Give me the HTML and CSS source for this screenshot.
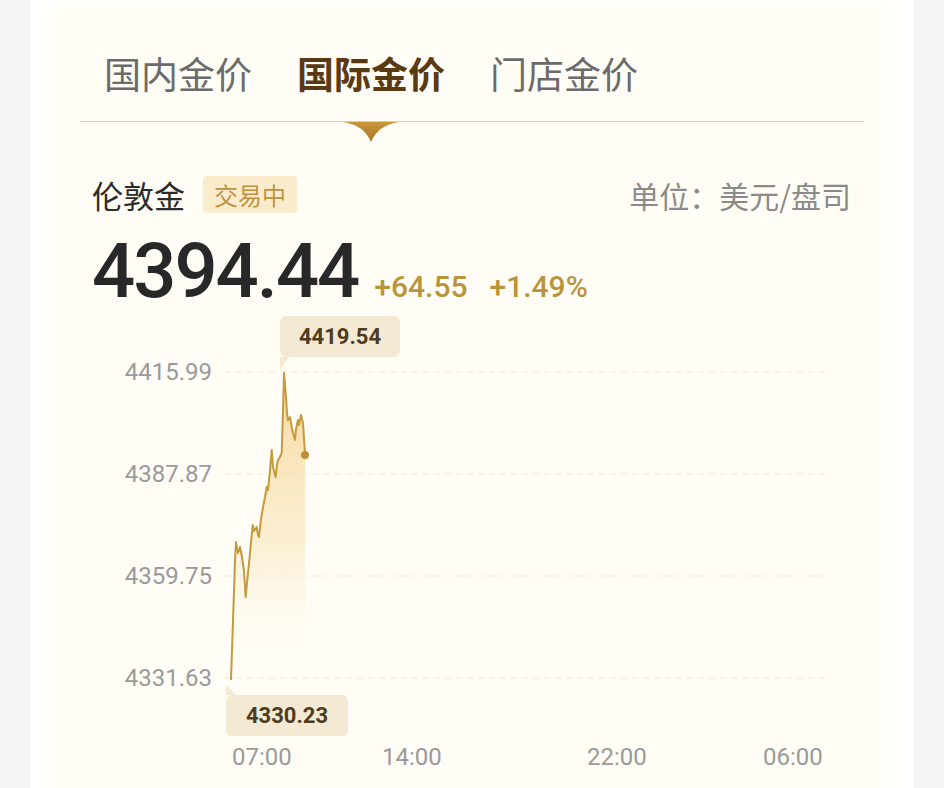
FILE: index.html
```html
<!DOCTYPE html>
<html lang="zh-CN">
<head>
    <meta charset="UTF-8">
    <meta name="viewport" content="width=device-width, initial-scale=1.0">
    <title>金价</title>
    <link rel="stylesheet" href="styles.css">
</head>
<body>
    <div class="panel">
        <div class="card">
            <div class="tabs">
                <span class="tab">国内金价</span>
                <span class="tab active">国际金价
                    <svg class="tab-mark" width="56" height="20" viewBox="0 0 56 20">
                        <defs>
                            <linearGradient id="markGrad" x1="0" y1="0" x2="0" y2="1">
                                <stop offset="0" stop-color="#c8963a"/>
                                <stop offset="1" stop-color="#a97628"/>
                            </linearGradient>
                        </defs>
                        <path d="M0 0 H56 Q35 3 28 20 Q21 3 0 0 Z" fill="url(#markGrad)"/>
                    </svg>
                </span>
                <span class="tab">门店金价</span>
            </div>

            <div class="head">
                <span class="name">伦敦金</span>
                <span class="badge">交易中</span>
                <span class="unit">单位：美元/盘司</span>
            </div>

            <div class="price-row">
                <span class="price">4394.44</span>
                <span class="change">+64.55</span>
                <span class="change">+1.49%</span>
            </div>

            <div class="chart">
                <div class="y-axis">
                    <span>4415.99</span>
                    <span>4387.87</span>
                    <span>4359.75</span>
                    <span>4331.63</span>
                </div>
                <svg class="plot" width="652" height="408" viewBox="0 0 652 408">
                    <defs>
                        <linearGradient id="fillGrad" x1="0" y1="0" x2="0" y2="1">
                            <stop offset="0" stop-color="#f3cf85" stop-opacity="0.8"/>
                            <stop offset="0.5" stop-color="#f8e2b4" stop-opacity="0.5"/>
                            <stop offset="0.85" stop-color="#fffdf5" stop-opacity="0"/>
                        </linearGradient>
                    </defs>
                    <g class="grid">
                        <line x1="13" y1="51" x2="613" y2="51"/>
                        <line x1="13" y1="153" x2="613" y2="153"/>
                        <line x1="13" y1="255" x2="613" y2="255"/>
                        <line x1="13" y1="357" x2="613" y2="357"/>
                    </g>
                    <path class="area" d="M19 359 L21 300 L23 240 L24 221 L25 228 L26 232 L28 226 L30 236 L32 250 L33.7 276 L35 262 L36 252 L38 232 L40.7 204 L42 210 L44.7 206 L46 214 L47 216 L49 198 L51 186 L53 176 L54.7 166 L56 169 L58 150 L59.7 129 L61 146 L62 150 L63.7 156 L65 144 L66 139 L68 136 L69.7 132 L71 90 L72 52 L73 64 L74 76 L75 92 L76 99 L78 96 L79.7 106 L81 112 L83 119 L84 108 L86 99 L87 104 L89 94 L90 98 L91 102 L92 118 L93 132 L93 400 L19 400 Z"/>
                    <path class="line" d="M19 359 L21 300 L23 240 L24 221 L25 228 L26 232 L28 226 L30 236 L32 250 L33.7 276 L35 262 L36 252 L38 232 L40.7 204 L42 210 L44.7 206 L46 214 L47 216 L49 198 L51 186 L53 176 L54.7 166 L56 169 L58 150 L59.7 129 L61 146 L62 150 L63.7 156 L65 144 L66 139 L68 136 L69.7 132 L71 90 L72 52 L73 64 L74 76 L75 92 L76 99 L78 96 L79.7 106 L81 112 L83 119 L84 108 L86 99 L87 104 L89 94 L90 98 L91 102 L92 118 L93 132"/>
                    <circle cx="93" cy="134" r="4" fill="#bf8f35"/>
                </svg>
                <div class="tip tip-high">4419.54</div>
                <div class="tip tip-low">4330.23</div>
            </div>

            <div class="x-axis">
                <span class="t1">07:00</span>
                <span class="t2">14:00</span>
                <span class="t3">22:00</span>
                <span class="t4">06:00</span>
            </div>
        </div>
    </div>
</body>
</html>
```

FILE: styles.css
```css
body {
    margin: 0;
    background: #f4f4f5;
    font-family: Roboto, "Noto Sans CJK SC", sans-serif;
}

.panel {
    margin-left: 30px;
    width: 884px;
    height: 788px;
    background: #ffffff;
    padding-top: 10px;
    box-sizing: border-box;
    overflow: hidden;
}

.card {
    margin: 0 34px 0 30px;
    height: 800px;
    padding: 0 16px 0 20px;
    background: #fffdf5;
    box-shadow: 0 0 22px 10px #fffdf5;
}

/* tabs */
.tabs {
    position: relative;
    display: flex;
    gap: 45px;
    padding: 45px 0 29px 24px;
    border-bottom: 1px solid #dccda6;
    font-family: "Noto Sans CJK SC", sans-serif;
    font-size: 37px;
    line-height: 37px;
    color: #6b6b6b;
}

.tab {
    position: relative;
}

.tab.active {
    color: #5a3a13;
    font-weight: 700;
}

.tab-mark {
    position: absolute;
    left: 50%;
    top: 67px;
    margin-left: -28px;
}

/* name row */
.head {
    display: flex;
    align-items: center;
    height: 37px;
    margin-top: 54px;
    padding-left: 12px;
    font-family: "Noto Sans CJK SC", sans-serif;
}

.name {
    font-size: 31px;
    color: #2b2b2b;
}

.badge {
    margin-left: 18px;
    padding: 0 11px;
    height: 37px;
    line-height: 37px;
    border-radius: 4px;
    background: #faeccb;
    color: #bd9244;
    font-size: 24px;
}

.unit {
    margin-left: auto;
    margin-right: 13px;
    font-size: 30px;
    color: #8a8a8a;
}

/* price */
.price-row {
    display: flex;
    align-items: baseline;
    margin-top: 20px;
    padding-left: 12px;
    height: 76px;
}

.price {
    font-size: 76px;
    line-height: 76px;
    font-weight: 500;
    letter-spacing: -2px;
    color: #282828;
}

.change {
    margin-left: 16px;
    font-size: 30px;
    font-weight: 500;
    color: #b8953a;
}

.change + .change {
    margin-left: 22px;
}

/* chart */
.chart {
    position: relative;
    display: flex;
    margin-top: 12px;
    height: 408px;
}

.y-axis {
    display: flex;
    flex-direction: column;
    width: 132px;
}

.y-axis span {
    height: 102px;
    line-height: 102px;
    text-align: right;
    font-size: 24px;
    color: #9a9a9a;
}

.plot {
    display: block;
}

.grid line {
    stroke: #f3efe4;
    stroke-width: 1.5;
    stroke-dasharray: 6 5;
}

.area {
    fill: url(#fillGrad);
}

.line {
    fill: none;
    stroke: #c49a3c;
    stroke-width: 2;
    stroke-linejoin: round;
}

.tip {
    position: absolute;
    width: 120px;
    height: 41px;
    line-height: 41px;
    text-align: center;
    border-radius: 6px;
    background: #f4e9d2;
    color: #4d3c21;
    font-size: 22px;
    font-weight: 700;
}

.tip-high {
    left: 200px;
    top: -5px;
}

.tip-high::after {
    content: "";
    position: absolute;
    left: 0;
    top: 100%;
    border-top: 13px solid #f4e9d2;
    border-right: 9px solid transparent;
}

.tip-low {
    left: 146px;
    top: 374px;
    width: 122px;
}

.tip-low::before {
    content: "";
    position: absolute;
    left: 0;
    bottom: 100%;
    border-bottom: 10px solid #f4e9d2;
    border-right: 10px solid transparent;
}

.x-axis {
    position: relative;
    height: 24px;
    margin-top: 16px;
    font-size: 24px;
    line-height: 24px;
    color: #9a9a9a;
}

.x-axis span {
    position: absolute;
    top: 0;
}

.x-axis .t1 { left: 152px; }
.x-axis .t2 { left: 302px; }
.x-axis .t3 { left: 507px; }
.x-axis .t4 { left: 683px; }
```
